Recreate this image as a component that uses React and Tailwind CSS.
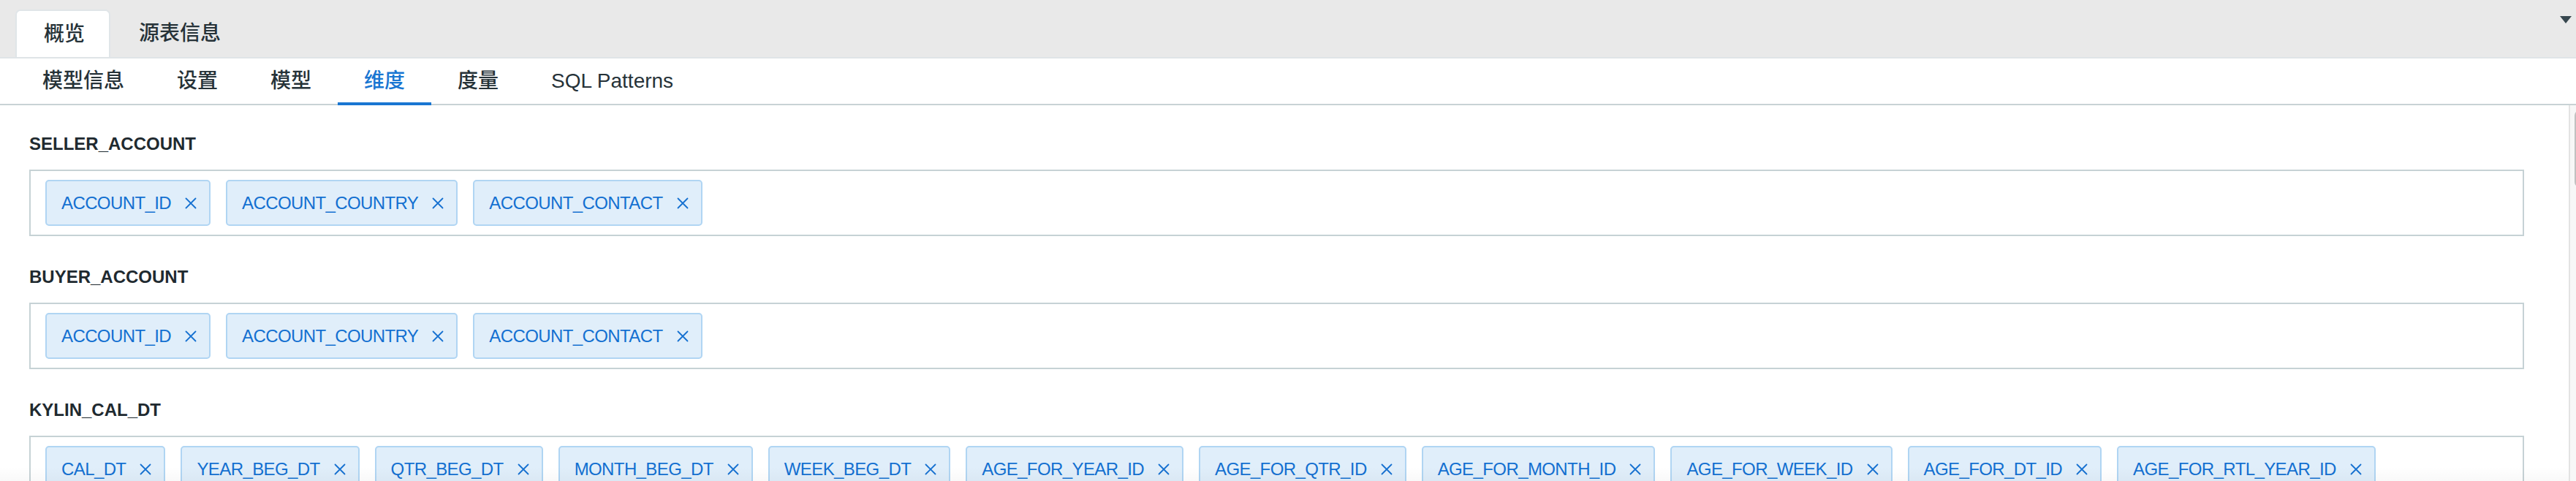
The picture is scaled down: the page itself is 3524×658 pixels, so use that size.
import React from "react";

const sections = [
  { name: "SELLER_ACCOUNT", cols: ["ACCOUNT_ID", "ACCOUNT_COUNTRY", "ACCOUNT_CONTACT"] },
  { name: "BUYER_ACCOUNT", cols: ["ACCOUNT_ID", "ACCOUNT_COUNTRY", "ACCOUNT_CONTACT"] },
  {
    name: "KYLIN_CAL_DT",
    cols: [
      "CAL_DT",
      "YEAR_BEG_DT",
      "QTR_BEG_DT",
      "MONTH_BEG_DT",
      "WEEK_BEG_DT",
      "AGE_FOR_YEAR_ID",
      "AGE_FOR_QTR_ID",
      "AGE_FOR_MONTH_ID",
      "AGE_FOR_WEEK_ID",
      "AGE_FOR_DT_ID",
      "AGE_FOR_RTL_YEAR_ID",
      "AGE_FOR_RTL_QTR_ID",
      "AGE_FOR_RTL_MONTH_ID",
      "AGE_FOR_RTL_WEEK_ID",
      "AGE_FOR_CS_WEEK_ID",
      "DAY_OF_CAL_ID",
    ],
  },
];

const subTabs = ["模型信息", "设置", "模型", "维度", "度量", "SQL Patterns"];

function CloseIcon() {
  return (
    <svg width="16" height="16" viewBox="0 0 16 16" className="shrink-0">
      <path d="M1.5 1.5 L14.5 14.5 M14.5 1.5 L1.5 14.5" stroke="#1671d1" strokeWidth="1.8" strokeLinecap="round" fill="none" />
    </svg>
  );
}

function Chip({ label }) {
  return (
    <div className="flex h-[63px] items-center gap-[19px] rounded-[5px] border-2 border-[#b0d5f3] bg-[#e0eefa] pl-[20px] pr-[17px]">
      <span className="text-[24px] leading-none tracking-[-0.6px] text-[#1370d1]">{label}</span>
      <CloseIcon />
    </div>
  );
}

export default function App() {
  return (
    <div className="relative h-[658px] w-[3524px] overflow-hidden bg-white font-['Liberation_Sans','Noto_Sans_CJK_SC',sans-serif] text-[#263238]">
      {/* top tabs bar */}
      <div className="relative flex h-[80px] items-end border-b-2 border-[#dfe4e7] bg-[#e9e9e9] pl-[21px]">
        <div className="flex h-[65px] w-[130px] items-center rounded-t-[7px] border-2 border-b-0 border-[#e0e5e8] bg-white pl-[37px] text-[28px] font-medium">
          概览
        </div>
        <div className="flex h-[65px] items-center pl-[39px] pr-[35px] text-[28px] font-medium">源表信息</div>
        <svg className="absolute right-[6px] top-[22px]" width="16" height="10" viewBox="0 0 16 10">
          <polygon points="0,0 16,0 8,10" fill="#37474f" />
        </svg>
      </div>

      {/* sub tabs */}
      <div className="flex h-[64px] border-b-2 border-[#c8d2d5] pl-[22px]">
        {subTabs.map((t) => {
          const active = t === "维度";
          return (
            <div
              key={t}
              className={
                active
                  ? "relative flex items-center px-[36px] text-[28px] font-medium text-[#1976d2]"
                  : "relative flex items-center px-[36px] text-[28px] font-medium text-[#263238]"
              }
            >
              {t}
              {active && <span className="absolute bottom-[-2px] left-0 right-0 h-[4px] bg-[#1976d2]" />}
            </div>
          );
        })}
      </div>

      {/* content + scrollbar */}
      <div className="flex h-[514px]">
        <div className="flex-1 pl-[40px] pr-[61px] pt-[35px]">
          {sections.map((s, i) => (
            <div key={i} className="mb-[38px]">
              <div className="mb-[17px] h-[36px] font-['Liberation_Sans',sans-serif] text-[24px] font-bold leading-[36px] text-[#1f2a30]">
                {s.name}
              </div>
              <div className="flex flex-wrap gap-[21px] border-2 border-[#c6d2d5] px-[20px] py-[12px]">
                {s.cols.map((c) => (
                  <Chip key={c} label={c} />
                ))}
              </div>
            </div>
          ))}
        </div>
        <div className="w-[10px] shrink-0 overflow-hidden border-l-2 border-[#e3e3e3] bg-[#f7f7f7]">
          <div className="ml-[6px] mt-[7px] h-[105px] w-[14px] rounded-full bg-[#c1c1c1]" />
        </div>
      </div>

      <div className="pointer-events-none absolute bottom-0 left-0 right-[10px] h-[20px] bg-gradient-to-b from-transparent to-black/[0.025]" />
    </div>
  );
}
